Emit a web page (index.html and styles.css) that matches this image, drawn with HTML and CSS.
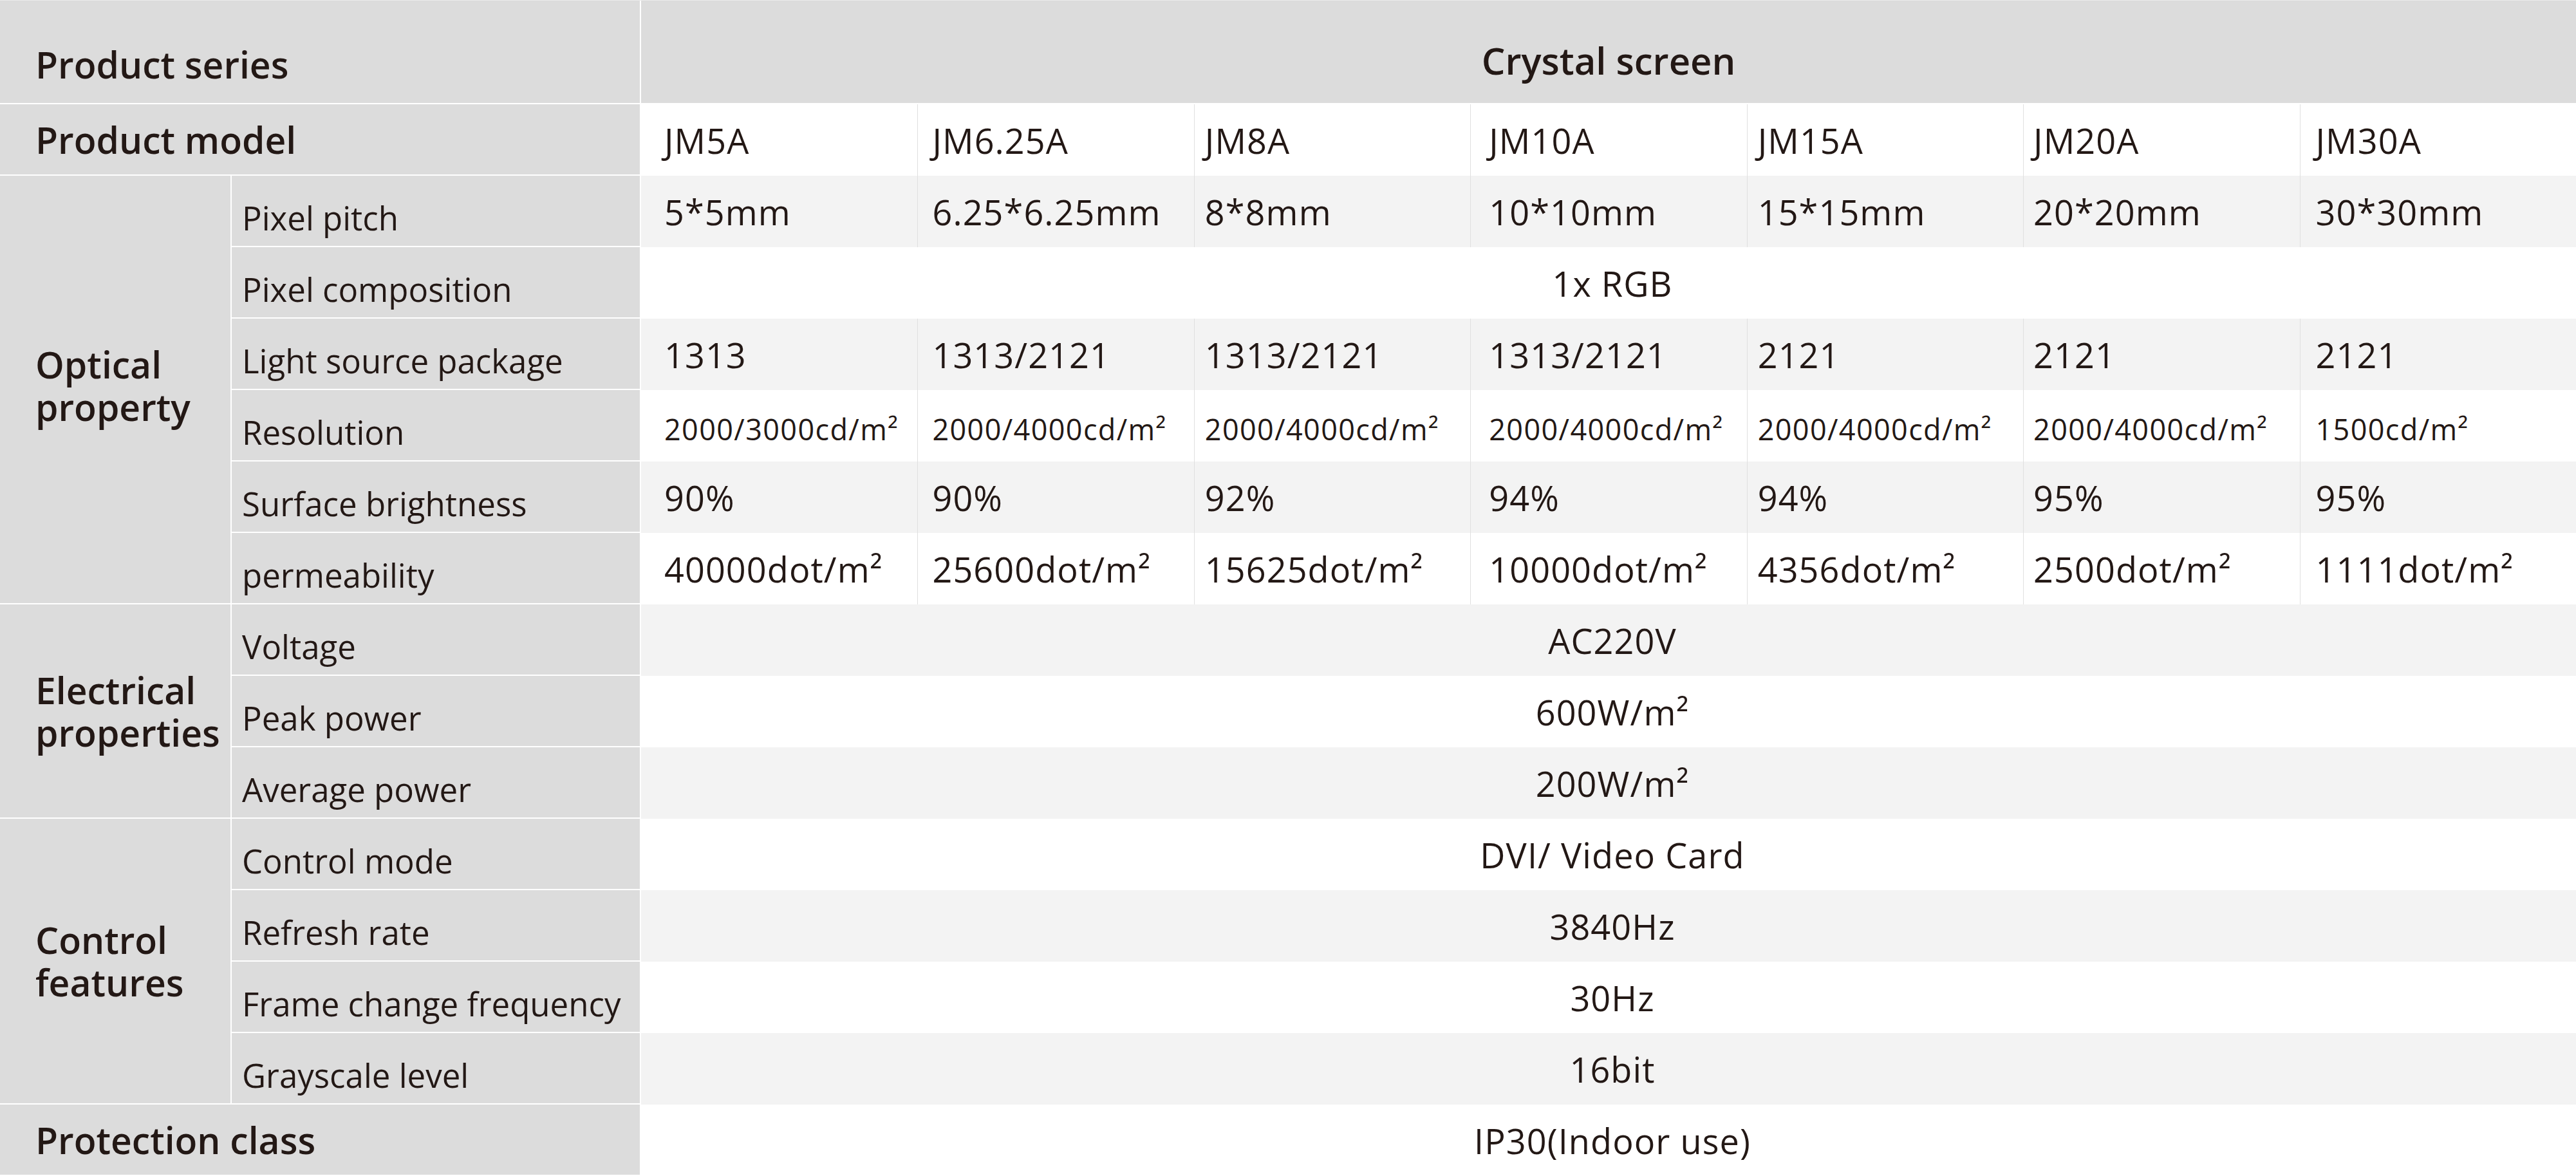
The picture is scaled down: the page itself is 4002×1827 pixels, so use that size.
FILE: index.html
```html
<!DOCTYPE html>
<html lang="en">
<head>
<meta charset="utf-8">
<title>Crystal screen specifications</title>
<link rel="stylesheet" href="styles.css">
</head>
<body>
<table class="spec">
  <colgroup>
    <col class="col-group">
    <col class="col-sub">
    <col><col><col><col><col><col><col>
  </colgroup>
  <tr class="head">
    <th colspan="2" class="lbl main">Product series</th>
    <th colspan="7" class="series">Crystal screen</th>
  </tr>
  <tr class="row">
    <th colspan="2" class="lbl main">Product model</th>
    <td>JM5A</td><td>JM6.25A</td><td>JM8A</td><td>JM10A</td><td>JM15A</td><td>JM20A</td><td>JM30A</td>
  </tr>
  <tr class="row alt">
    <th rowspan="6" class="lbl group optical">Optical<br>property</th>
    <th class="lbl sub">Pixel pitch</th>
    <td>5*5mm</td><td>6.25*6.25mm</td><td>8*8mm</td><td>10*10mm</td><td>15*15mm</td><td>20*20mm</td><td>30*30mm</td>
  </tr>
  <tr class="row">
    <th class="lbl sub">Pixel composition</th>
    <td colspan="7" class="all">1x RGB</td>
  </tr>
  <tr class="row alt">
    <th class="lbl sub">Light source package</th>
    <td>1313</td><td>1313/2121</td><td>1313/2121</td><td>1313/2121</td><td>2121</td><td>2121</td><td>2121</td>
  </tr>
  <tr class="row small">
    <th class="lbl sub">Resolution</th>
    <td>2000/3000cd/m²</td><td>2000/4000cd/m²</td><td>2000/4000cd/m²</td><td>2000/4000cd/m²</td><td>2000/4000cd/m²</td><td>2000/4000cd/m²</td><td>1500cd/m²</td>
  </tr>
  <tr class="row alt">
    <th class="lbl sub">Surface brightness</th>
    <td>90%</td><td>90%</td><td>92%</td><td>94%</td><td>94%</td><td>95%</td><td>95%</td>
  </tr>
  <tr class="row">
    <th class="lbl sub">permeability</th>
    <td>40000dot/m²</td><td>25600dot/m²</td><td>15625dot/m²</td><td>10000dot/m²</td><td>4356dot/m²</td><td>2500dot/m²</td><td>1111dot/m²</td>
  </tr>
  <tr class="row alt">
    <th rowspan="3" class="lbl group">Electrical<br>properties</th>
    <th class="lbl sub">Voltage</th>
    <td colspan="7" class="all">AC220V</td>
  </tr>
  <tr class="row">
    <th class="lbl sub">Peak power</th>
    <td colspan="7" class="all">600W/m²</td>
  </tr>
  <tr class="row alt">
    <th class="lbl sub">Average power</th>
    <td colspan="7" class="all">200W/m²</td>
  </tr>
  <tr class="row">
    <th rowspan="4" class="lbl group">Control<br>features</th>
    <th class="lbl sub">Control mode</th>
    <td colspan="7" class="all">DVI/ Video Card</td>
  </tr>
  <tr class="row alt">
    <th class="lbl sub">Refresh rate</th>
    <td colspan="7" class="all">3840Hz</td>
  </tr>
  <tr class="row">
    <th class="lbl sub">Frame change frequency</th>
    <td colspan="7" class="all">30Hz</td>
  </tr>
  <tr class="row alt">
    <th class="lbl sub">Grayscale level</th>
    <td colspan="7" class="all">16bit</td>
  </tr>
  <tr class="row">
    <th colspan="2" class="lbl main">Protection class</th>
    <td colspan="7" class="all">IP30(Indoor use)</td>
  </tr>
</table>
</body>
</html>
```

FILE: styles.css
```css
html, body {
  margin: 0;
  padding: 0;
  background: #ffffff;
}

body {
  font-family: "Open Sans", "Liberation Sans", sans-serif;
  color: #231815;
}

th, td {
  padding: 0;
  vertical-align: middle;
  white-space: nowrap;
  overflow: hidden;
}

.spec {
  width: 4002px;
  table-layout: fixed;
  border-collapse: separate;
  border-spacing: 0;
  border-top: 1px solid #ebebeb;
}

.col-group { width: 360px; }
.col-sub { width: 636px; }

.head { height: 161px; }
.row { height: 111px; }

.lbl {
  background: #dcdcdc;
  text-align: left;
  border-right: 2px solid #ffffff;
  border-bottom: 2px solid #ffffff;
}

.main,
.group {
  font-size: 57px;
  font-weight: 600;
  line-height: 66px;
  padding-left: 55px;
}

.head .main {
  padding-top: 38px;
}

.optical {
  padding-bottom: 12px;
}

.sub {
  font-size: 51px;
  font-weight: 400;
  padding-left: 16px;
  padding-top: 20px;
}

.series {
  background: #dcdcdc;
  border-bottom: 2px solid #ffffff;
  font-size: 58px;
  font-weight: 600;
  text-align: center;
  padding-top: 26px;
}

.spec td {
  font-size: 54px;
  font-weight: 400;
  letter-spacing: 0.02em;
  text-align: left;
  background: #ffffff;
}

.spec .alt td {
  background: #f3f3f3;
}

.spec .small td {
  font-size: 45px;
  letter-spacing: 0.03em;
  padding-top: 10px;
}

.spec td:nth-of-type(n+2) {
  border-left: 1px solid #e0e0e0;
}

.spec td:nth-of-type(1) { padding-left: 36px; }
.spec td:nth-of-type(2) { padding-left: 22px; }
.spec td:nth-of-type(3) { padding-left: 16px; }
.spec td:nth-of-type(4) { padding-left: 28px; }
.spec td:nth-of-type(5) { padding-left: 16px; }
.spec td:nth-of-type(6) { padding-left: 15px; }
.spec td:nth-of-type(7) { padding-left: 24px; }

.spec td.all {
  text-align: center;
  padding-left: 12px;
}
```
